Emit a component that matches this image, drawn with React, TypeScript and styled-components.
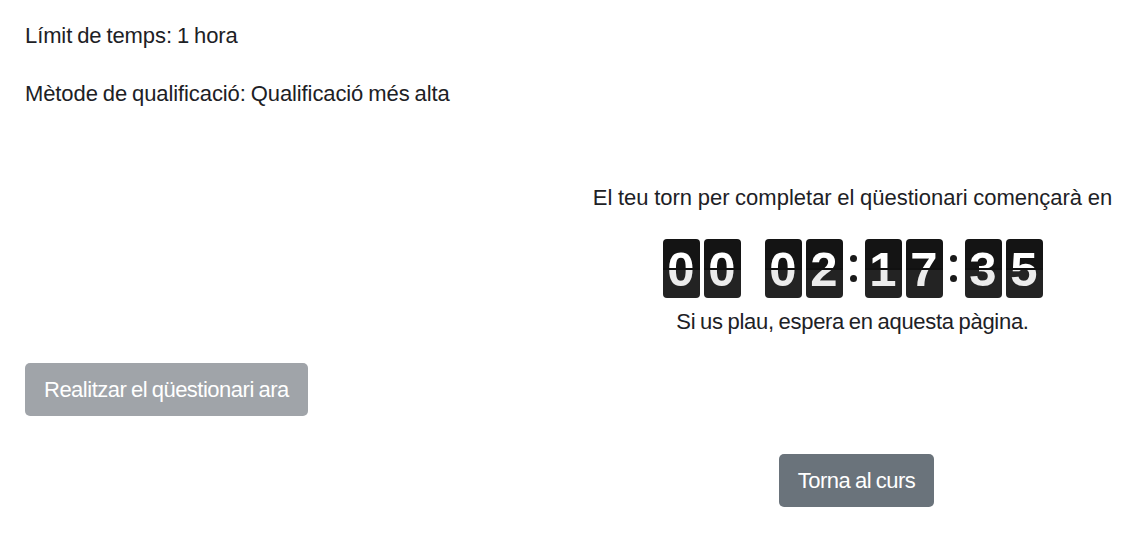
import React, { FC } from "react";
import styled, { createGlobalStyle } from "styled-components";

const GlobalStyle = createGlobalStyle`
  html, body {
    margin: 0;
    padding: 0;
    background: #ffffff;
  }
  body {
    font-family: "Liberation Sans", Arial, sans-serif;
    color: #1d2125;
  }
`;

type Group = { digits: string; sep: "space" | "colon" | "none" };

const groups: Group[] = [
  { digits: "00", sep: "space" },
  { digits: "02", sep: "colon" },
  { digits: "17", sep: "colon" },
  { digits: "35", sep: "none" },
];

const FlipDigit: FC<{ value: string }> = ({ value }) => (
  <Card>
    <CardTop>
      <DigitText>{value}</DigitText>
    </CardTop>
    <CardBottom>
      <DigitText $lower>{value}</DigitText>
    </CardBottom>
    <Fold />
  </Card>
);

const Countdown: FC = () => (
  <Clock>
    {groups.map((g, i) => (
      <React.Fragment key={i}>
        <DigitGroup>
          {g.digits.split("").map((d, j) => (
            <FlipDigit key={j} value={d} />
          ))}
        </DigitGroup>
        {g.sep === "colon" && (
          <Colon>
            <Dot />
            <Dot />
          </Colon>
        )}
        {g.sep === "space" && <Spacer />}
      </React.Fragment>
    ))}
  </Clock>
);

const App: FC = () => {
  return (
    <Page>
      <GlobalStyle />
      <Info>
        <Line>Límit de temps: 1 hora</Line>
        <Line>Mètode de qualificació: Qualificació més alta</Line>
      </Info>
      <WaitPanel>
        <Message>El teu torn per completar el qüestionari començarà en</Message>
        <Countdown />
        <Note>Si us plau, espera en aquesta pàgina.</Note>
      </WaitPanel>
      <StartRow>
        <Button $variant="disabled" disabled>
          Realitzar el qüestionari ara
        </Button>
      </StartRow>
      <BackRow>
        <Button $variant="secondary">Torna al curs</Button>
      </BackRow>
    </Page>
  );
};

const Page = styled.div`
  display: grid;
  grid-template-columns: 1fr 547px;
  padding: 0 0 0 25px;
  width: 1126px;
  box-sizing: border-box;
`;

const Info = styled.div`
  grid-column: 1 / -1;
  padding-top: 21px;
  display: flex;
  flex-direction: column;
  gap: 28px;
`;

const Line = styled.p`
  margin: 0;
  font-size: 22px;
  line-height: 30px;
  letter-spacing: -0.1px;
  word-spacing: -1px;
`;

const WaitPanel = styled.div`
  grid-column: 2;
  margin-top: 74px;
  display: flex;
  flex-direction: column;
  align-items: center;
`;

const Message = styled.div`
  font-size: 22px;
  line-height: 30px;
  letter-spacing: 0;
  word-spacing: -0.5px;
`;

const Note = styled(Message)`
  margin-top: 9px;
  letter-spacing: -0.3px;
  word-spacing: -1px;
`;

const Clock = styled.div`
  display: flex;
  align-items: center;
  margin-top: 26px;
`;

const DigitGroup = styled.div`
  display: flex;
  gap: 4px;
`;

const Spacer = styled.div`
  width: 24px;
`;

const Colon = styled.div`
  width: 22px;
  height: 59px;
  display: flex;
  flex-direction: column;
  align-items: center;
  justify-content: center;
  gap: 13px;
`;

const Dot = styled.span`
  width: 7px;
  height: 7px;
  border-radius: 50%;
  background: #1a1a1a;
`;

const Card = styled.div`
  position: relative;
  width: 37px;
  height: 59px;
  border-radius: 4px;
`;

const Half = styled.div`
  position: relative;
  height: 50%;
  overflow: hidden;
`;

const CardTop = styled(Half)`
  background: #141414;
  border-radius: 4px 4px 0 0;
`;

const CardBottom = styled(Half)`
  background: #232323;
  border-radius: 0 0 4px 4px;
`;

const DigitText = styled.span<{ $lower?: boolean }>`
  position: absolute;
  left: 0;
  right: 0;
  top: ${(p) => (p.$lower ? "-29.5px" : "0")};
  height: 59px;
  line-height: 61px;
  text-align: center;
  font-family: "Liberation Sans", Arial, sans-serif;
  font-weight: bold;
  font-size: 49px;
  color: ${(p) => (p.$lower ? "#ececec" : "#ffffff")};
`;

const Fold = styled.div`
  position: absolute;
  left: 0;
  right: 0;
  top: 29px;
  height: 1.5px;
  background: #111;
`;

const StartRow = styled.div`
  grid-column: 1 / -1;
  margin-top: 26px;
`;

const BackRow = styled.div`
  grid-column: 2;
  margin-top: 38px;
  display: flex;
  justify-content: center;
  padding-left: 8px;
`;

const Button = styled.button<{ $variant: "disabled" | "secondary" }>`
  font-family: "Liberation Sans", Arial, sans-serif;
  font-size: 22px;
  letter-spacing: -0.5px;
  word-spacing: -1px;
  color: #ffffff;
  border: none;
  border-radius: 5px;
  height: 53px;
  padding: 0 19px;
  background: ${(p) => (p.$variant === "disabled" ? "#a0a4a9" : "#6a737b")};
  cursor: ${(p) => (p.$variant === "disabled" ? "default" : "pointer")};
`;

export default App;
